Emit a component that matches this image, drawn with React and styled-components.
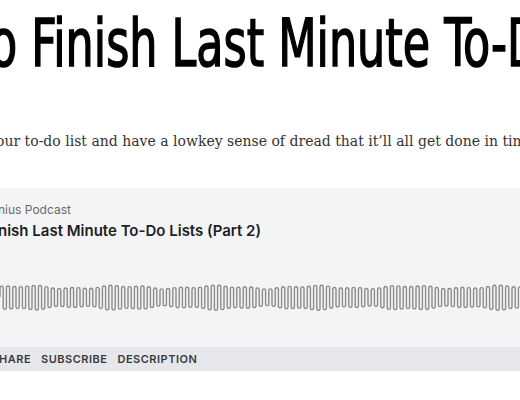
import React from 'react';
import styled, { createGlobalStyle } from 'styled-components';

const GlobalStyle = createGlobalStyle`
  body {
    margin: 0;
    background: #fff;
    overflow: hidden;
  }
`;

const Page = styled.div`
  width: 520px;
  height: 400px;
  overflow: hidden;
`;

const Heading = styled.h1`
  margin: 0;
  padding-top: 6px;
  margin-left: -10px;
  white-space: nowrap;
  font-family: "DejaVu Sans Condensed", "DejaVu Sans", sans-serif;
  font-size: 65px;
  font-weight: 400;
  line-height: 76px;
  color: #000;
  -webkit-text-stroke: 1.5px #000;
  transform: scaleX(0.76);
  transform-origin: left center;
`;

const Lede = styled.p`
  margin: 47px 0 0 -4px;
  white-space: nowrap;
  font-family: "DejaVu Serif", serif;
  font-size: 14px;
  line-height: 24px;
  color: #333;
`;

const Player = styled.section`
  margin-top: 35px;
  background: #f3f4f6;
  font-family: Inter, "Noto Sans", sans-serif;
`;

const Meta = styled.div`
  padding: 14px 0 0;
  margin-left: -2px;
  white-space: nowrap;
`;

const Show = styled.div`
  font-size: 12px;
  line-height: 16px;
  color: #6b6b6b;
`;

const Title = styled.div`
  margin-top: 3px;
  font-size: 15px;
  font-weight: 600;
  line-height: 20px;
  color: #1f1f1f;
`;

const Wave = styled.svg`
  display: block;
  margin-top: 36px;
  width: 520px;
  height: 40px;
`;

const Actions = styled.div`
  margin-top: 30px;
  height: 24px;
  display: flex;
  align-items: center;
  gap: 10px;
  margin-left: -1px;
  background: #e5e7eb;
`;

const Action = styled.span`
  font-size: 11px;
  font-weight: 600;
  letter-spacing: 0.5px;
  color: #3a3a3a;
  text-transform: uppercase;
`;

const buildWave = () => {
  const r = 1.6;
  const step = 2 * r;
  const mid = 20;
  let d = `M0 ${mid}`;
  let x = 0;
  let i = 0;
  while (x < 530) {
    const n = Math.sin(i * 0.21) * 0.6 + Math.sin(i * 0.57 + 1.3) * 0.4;
    if (i % 2 === 0) {
      const top = mid - 10 - n * 2;
      d += ` L${x.toFixed(2)} ${(top + r).toFixed(2)} A${r} ${r} 0 0 1 ${(x + step).toFixed(2)} ${(top + r).toFixed(2)}`;
    } else {
      const bot = mid + 11 + n * 2.4;
      d += ` L${x.toFixed(2)} ${(bot - r).toFixed(2)} A${r} ${r} 0 0 0 ${(x + step).toFixed(2)} ${(bot - r).toFixed(2)}`;
    }
    x += step;
    i += 1;
  }
  return d;
};

const wavePath = buildWave();

const App = () => (
  <Page>
    <GlobalStyle />
    <Heading>o Finish Last Minute To-Do Lists</Heading>
    <Lede>our to-do list and have a lowkey sense of dread that it’ll all get done in time.</Lede>
    <Player>
      <Meta>
        <Show>nius Podcast</Show>
        <Title>nish Last Minute To-Do Lists (Part 2)</Title>
      </Meta>
      <Wave viewBox="0 0 520 40">
        <path d={wavePath} fill="none" stroke="#8a8a8a" strokeWidth="1.4" />
      </Wave>
      <Actions>
        <Action>hare</Action>
        <Action>Subscribe</Action>
        <Action>Description</Action>
      </Actions>
    </Player>
  </Page>
);

export default App;
